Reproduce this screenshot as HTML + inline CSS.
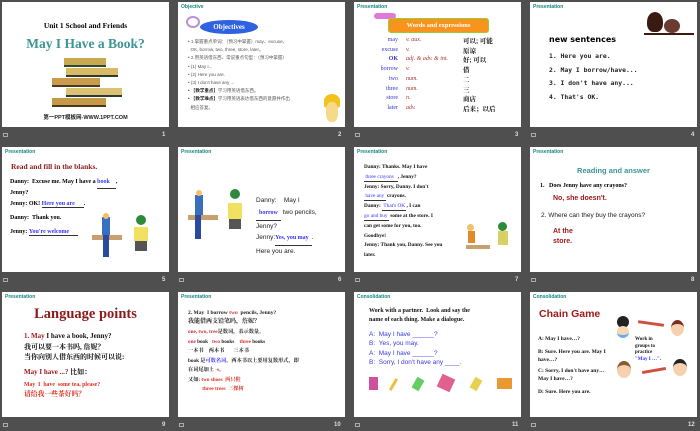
<!DOCTYPE html>
<html><head><meta charset="utf-8"><style>
*{margin:0;padding:0;box-sizing:border-box}
body{width:700px;height:431px;background:#4f4f4f;position:relative;overflow:hidden;font-family:"Liberation Sans","Noto Sans CJK SC",sans-serif}
.s{position:absolute;width:167px;height:125px;background:#fff;overflow:hidden}
.s div,.s span.a{position:absolute;white-space:nowrap}
.h{left:3px;top:2px;font-size:5px;color:#16877f;font-weight:bold}
.n{position:absolute;color:#ddd;font-size:6px;font-weight:bold}
.ic{position:absolute;width:5px;height:4px;border:1px solid #aaa}
.sf{font-family:"Liberation Serif","Noto Serif CJK SC",serif}
.b{font-weight:bold}
.u{border-bottom:1px solid #333;display:inline-block;color:#33f}
</style></head><body>

<!-- slide 1 -->
<div class="s" style="left:2px;top:2px">
<div class="sf b" style="left:0;width:167px;text-align:center;top:19px;font-size:7.5px">Unit 1 School and Friends</div>
<div class="sf b" style="left:0;width:167px;text-align:center;top:34px;font-size:13.5px;color:#3a9595">May I Have a Book?</div>
<div style="left:62px;top:56px;width:42px;height:9px;background:#c9a94f;border-bottom:2px solid #2c4a35"></div>
<div style="left:64px;top:66px;width:52px;height:9px;background:#d9bb66;border-bottom:2px solid #2f3a2c"></div>
<div style="left:50px;top:76px;width:48px;height:9px;background:#c89c4a;border-bottom:2px solid #4a3a20"></div>
<div style="left:64px;top:86px;width:56px;height:9px;background:#dcc277;border-bottom:2px solid #2c3a30"></div>
<div style="left:50px;top:96px;width:54px;height:9px;background:#c49a48;border-bottom:2px solid #4a3a20"></div>
<div class="b" style="left:0;width:167px;text-align:center;top:111px;font-size:5.5px;color:#222">第一PPT模板网-WWW.1PPT.COM</div>
</div>

<!-- slide 2 -->
<div class="s" style="left:178px;top:2px">
<div class="h">Objective</div>
<div style="left:8px;top:14px;width:14px;height:12px;border:2px solid #b88fd8;border-radius:50%"></div>
<div style="left:22px;top:18px;width:58px;height:14px;background:#2f62e0;border-radius:50%;color:#fff;font-size:7px;font-weight:bold;text-align:center;line-height:14px" class="sf">Objectives</div>
<div style="left:10px;top:36px;font-size:4.5px;color:#555;line-height:8.2px">• 1.掌握重点单词：（预习中掌握）may、excuse、<br>&nbsp;&nbsp;OK, borrow, two, three, store, later。<br>• 2.用英语借东西、常说重点句型：（预习中掌握）<br>• (1) May I...<br>• (2) Here you are.<br>• (3) I don't have any ...<br><b style="color:#222">• 【教学重点】</b>学习用英语借东西。<br><b style="color:#222">• 【教学难点】</b>学习用英语表达借东西的意愿并作出<br>&nbsp;&nbsp;相应答复。</div>
<div style="left:146px;top:92px;width:16px;height:14px;background:#f3c21c;border-radius:50% 50% 20% 20%"></div>
<div style="left:148px;top:100px;width:12px;height:20px;background:#f7d98a;border-radius:40%"></div>
</div>

<!-- slide 3 -->
<div class="s" style="left:354px;top:2px">
<div class="h">Presentation</div>
<div style="left:20px;top:11px;width:22px;height:6px;background:#e07ad8;border-radius:3px"></div>
<div class="sf b" style="left:34px;top:16px;width:101px;height:15px;background:#f7941d;border:1px solid #9c3;border-radius:3px;color:#fff;font-size:6.5px;text-align:center;line-height:13px">Words and expressions</div>
<div class="sf" style="left:0;width:44px;text-align:right;top:34px;font-size:6px;line-height:9.7px;color:#33c">may<br>excuse<br><b>OK</b><br>borrow<br>two<br>three<br>store<br>later</div>
<div class="sf" style="left:52px;top:34px;font-size:6px;line-height:9.7px;color:#a33;font-style:italic">v. aux.<br>v.<br>adj. &amp; adv. &amp; int.<br>v.<br>num.<br>num.<br>n.<br>adv.</div>
<div class="b" style="left:109px;top:34px;font-size:6.5px;line-height:9.7px;color:#111;font-family:'Noto Serif CJK SC',serif">可以; 可能<br>原谅<br>好; 可以<br>借<br>二<br>三<br>商店<br>后来；以后</div>
</div>

<!-- slide 4 -->
<div class="s" style="left:530px;top:2px">
<div class="h">Presentation</div>
<div style="left:117px;top:10px;width:16px;height:20px;background:#3a1a12;border-radius:50% 50% 40% 40%"></div>
<div style="left:134px;top:17px;width:16px;height:14px;background:#6b3a30;border-radius:50%"></div>
<div style="left:114px;top:31px;width:50px;height:1.5px;background:#3a1a12"></div>
<div class="b" style="left:19px;top:33px;font-size:8px;font-family:'DejaVu Sans',sans-serif">new sentences</div>
<div style="left:19px;top:48px;font-size:6.4px;line-height:13.5px;font-family:'DejaVu Sans Mono',monospace;font-weight:bold;color:#222">1. Here you are.<br>2. May I borrow/have...<br>3. I don't have any...<br>4. That's OK.</div>
</div>

<!-- slide 5 -->
<div class="s" style="left:2px;top:147px">
<div class="h">Presentation</div>
<div class="sf b" style="left:9px;top:15px;font-size:7.5px;color:#8b1a1a">Read and fill in the blanks.</div>
<div class="sf b" style="left:8px;top:31px;font-size:6px;line-height:9.5px">Danny: &nbsp;Excuse me. May I have a <span class="u">book&nbsp;&nbsp;&nbsp;&nbsp;</span>,<br>Jenny?</div>
<div class="sf b" style="left:8px;top:54px;font-size:6px">Jenny: OK! <span class="u">Here you are&nbsp;&nbsp;&nbsp;&nbsp;&nbsp;&nbsp;</span>.</div>
<div class="sf b" style="left:8px;top:68px;font-size:6px">Danny: &nbsp;Thank you.</div>
<div class="sf b" style="left:8px;top:82px;font-size:6px">Jenny: <span class="u">You're welcome&nbsp;&nbsp;&nbsp;&nbsp;&nbsp;&nbsp;</span></div>
<div style="left:90px;top:88px;width:30px;height:5px;background:#c8a070"></div>
<div style="left:100px;top:70px;width:8px;height:18px;background:#3a6fc0"></div>
<div style="left:101px;top:66px;width:6px;height:6px;background:#f2c06a;border-radius:50%"></div>
<div style="left:101px;top:88px;width:6px;height:22px;background:#2a4aa0"></div>
<div style="left:132px;top:80px;width:14px;height:14px;background:#f2e060"></div>
<div style="left:134px;top:68px;width:10px;height:10px;background:#2e8a3a;border-radius:50%"></div>
<div style="left:133px;top:94px;width:12px;height:10px;background:#555"></div>
</div>

<!-- slide 6 -->
<div class="s" style="left:178px;top:147px">
<div class="h">Presentation</div>
<div style="left:10px;top:68px;width:30px;height:5px;background:#c8a070"></div>
<div style="left:17px;top:48px;width:8px;height:20px;background:#3a6fc0"></div>
<div style="left:18px;top:43px;width:6px;height:6px;background:#f2c06a;border-radius:50%"></div>
<div style="left:17px;top:68px;width:6px;height:24px;background:#2a4aa0"></div>
<div style="left:50px;top:56px;width:14px;height:16px;background:#f2e060"></div>
<div style="left:52px;top:42px;width:10px;height:10px;background:#2e8a3a;border-radius:50%"></div>
<div style="left:51px;top:72px;width:12px;height:10px;background:#555"></div>
<div style="left:78px;top:48px;font-size:6.5px;line-height:11.8px;color:#222">Danny: &nbsp;&nbsp;&nbsp;May I<br><span class="u b sf" style="font-size:6px">&nbsp;&nbsp;borrow&nbsp;&nbsp;</span> two pencils,<br>Jenny?<br>Jenny:<span class="u b sf" style="font-size:6px">Yes, you may&nbsp;&nbsp;</span>.<br>Here you are.</div>
</div>

<!-- slide 7 -->
<div class="s" style="left:354px;top:147px">
<div class="h">Presentation</div>
<div class="sf b" style="left:10px;top:16px;font-size:5.3px;line-height:9.8px;color:#111">Danny: Thanks. May I have<br><span class="u" style="font-weight:normal;line-height:7px">&nbsp;three crayons&nbsp;&nbsp;&nbsp;</span>, Jenny?<br>Jenny: Sorry, Danny. I don't<br><span class="u" style="font-weight:normal;line-height:7px">&nbsp;have&nbsp;any&nbsp;</span> crayons.<br>Danny: <span class="u" style="font-weight:normal;line-height:7px">&nbsp;That's OK&nbsp;</span>, I can<br><span class="u" style="font-weight:normal;line-height:7px">go and buy&nbsp;</span> some at the store. I<br>can get some for you, too.<br>Goodbye!<br>Jenny: Thank you, Danny. See you<br>later.</div>
<div style="left:112px;top:98px;width:24px;height:4px;background:#c8a070"></div>
<div style="left:114px;top:84px;width:7px;height:12px;background:#e08a2a"></div>
<div style="left:113px;top:77px;width:7px;height:7px;background:#f2c06a;border-radius:50%"></div>
<div style="left:144px;top:84px;width:10px;height:14px;background:#d8d060"></div>
<div style="left:144px;top:75px;width:9px;height:9px;background:#2e8a3a;border-radius:50%"></div>
</div>

<!-- slide 8 -->
<div class="s" style="left:530px;top:147px">
<div class="h">Presentation</div>
<div class="b" style="left:0;width:167px;text-align:center;top:19px;font-size:7.5px;color:#3a9595">Reading and answer</div>
<div class="sf b" style="left:10px;top:36px;font-size:6px">1. &nbsp;&nbsp;Does Jenny have any crayons?</div>
<div class="b" style="left:23px;top:48px;font-size:7px;color:#a01818">No, she doesn't.</div>
<div style="left:11px;top:65px;font-size:6.5px;color:#222">2. Where can they buy the crayons?</div>
<div class="b" style="left:23px;top:80px;font-size:7px;color:#a01818;line-height:10px">At the<br>store.</div>
</div>

<!-- slide 9 -->
<div class="s" style="left:2px;top:292px">
<div class="h">Presentation</div>
<div class="sf b" style="left:0;width:167px;text-align:center;top:14px;font-size:14.5px;color:#8b1a1a">Language points</div>
<div class="sf b" style="left:22px;top:39px;font-size:7px;line-height:10.5px;color:#111"><span style="color:#a01818">1. May</span> I have a book, Jenny?<br>我可以要一本书吗, 詹妮？<br>当你向别人借东西的时候可以说:</div>
<div class="sf b" style="left:22px;top:75px;font-size:7px;color:#a01818">May I have ...? <span style="color:#111">比如：</span></div>
<div class="sf b" style="left:22px;top:89px;font-size:5.8px;line-height:9px;color:#e03020">May &nbsp;I &nbsp;have &nbsp;some tea, please?<br><span style="font-size:6.8px">请给我一些茶好吗？</span></div>
</div>

<!-- slide 10 -->
<div class="s" style="left:178px;top:292px">
<div class="h">Presentation</div>
<div class="sf b" style="left:10px;top:17px;font-size:5.5px;line-height:9px;color:#222">2. May &nbsp;I borrow <span style="color:#c33">two</span> &nbsp;pencils, Jenny?<br><span style="font-size:6px">我能借两支铅笔吗，詹妮？</span></div>
<div class="sf b" style="left:10px;top:36px;font-size:5.2px;line-height:9.5px;color:#222"><span style="color:#c33">one, two, tree</span>是数词，表示数量。<br><span style="color:#c33">one</span> book &nbsp;&nbsp;<span style="color:#c33">two</span> books &nbsp;&nbsp;&nbsp;<span style="color:#c33">three</span> books<br>一本书 &nbsp;&nbsp;&nbsp;两本书 &nbsp;&nbsp;&nbsp;&nbsp;&nbsp;&nbsp;三本书<br>book 是<span style="color:#33f">可数名词</span>，两本书以上要用复数形式，即<br>在词尾加上 <span style="color:#c33">-s</span>。<br>又如: <span style="color:#e03020">two shoes &nbsp;两只鞋</span><br>&nbsp;&nbsp;&nbsp;&nbsp;&nbsp;&nbsp;&nbsp;&nbsp;&nbsp;&nbsp;&nbsp;<span style="color:#e03020">three trees &nbsp;三棵树</span></div>
</div>

<!-- slide 11 -->
<div class="s" style="left:354px;top:292px">
<div class="h">Consolidation</div>
<div class="sf b" style="left:15px;top:15px;font-size:6px;line-height:8.5px;color:#111">Work with a partner. &nbsp;Look and say the<br>name of each thing. Make a dialogue.</div>
<div style="left:15px;top:38px;font-size:6.5px;line-height:9.3px;color:#3a3ae0">A: &nbsp;May I have ______?<br>B: &nbsp;Yes, you may.<br>A: &nbsp;May I have ______?<br>B: &nbsp;Sorry, I don't have any ____.</div>
<div style="left:15px;top:85px;width:9px;height:13px;background:#d050a0"></div>
<div style="left:38px;top:86px;width:3px;height:13px;background:#e8c040;transform:rotate(30deg)"></div>
<div style="left:60px;top:86px;width:8px;height:12px;background:#6c6;transform:rotate(30deg)"></div>
<div style="left:85px;top:84px;width:14px;height:14px;background:#e06090;transform:rotate(25deg)"></div>
<div style="left:118px;top:86px;width:8px;height:12px;background:#e8d050;transform:rotate(30deg)"></div>
<div style="left:143px;top:86px;width:15px;height:11px;background:#e89a30"></div>
</div>

<!-- slide 12 -->
<div class="s" style="left:530px;top:292px">
<div class="h">Consolidation</div>
<div class="b" style="left:9px;top:16px;font-size:10.5px;color:#a01818">Chain Game</div>
<div class="sf b" style="left:8px;top:43px;font-size:5.5px;line-height:8.5px;color:#111">A: May I have…?</div>
<div class="sf b" style="left:8px;top:57px;font-size:5.5px;line-height:7.5px;color:#111">B: Sure. Here you are. May I<br>have…?</div>
<div class="sf b" style="left:8px;top:76px;font-size:5.5px;line-height:7.5px;color:#111">C: Sorry, I don't have any…<br>May I have…?</div>
<div class="sf b" style="left:8px;top:97px;font-size:5.5px;color:#111">D: Sure. Here you are.</div>
<div class="sf b" style="left:105px;top:45px;font-size:5px;line-height:6.5px;color:#111">Work in<br>groups to<br>practice<br><span style="color:#33f">"May I …"</span>.</div>
<div style="left:87px;top:24px;width:12px;height:12px;background:#222;border-radius:50%"></div>
<div style="left:87px;top:34px;width:12px;height:12px;background:#f7d8b0;border-radius:50%;border-bottom:3px solid #6af"></div>
<div style="left:141px;top:28px;width:13px;height:16px;background:#f7d0b0;border-radius:50%;border-top:4px solid #7a3020"></div>
<div style="left:87px;top:69px;width:14px;height:17px;background:#f7d0b0;border-radius:50%;border-top:4px solid #8a5a30"></div>
<div style="left:143px;top:67px;width:14px;height:17px;background:#f7d0b0;border-radius:50%;border-top:4px solid #222"></div>
<div style="left:108px;top:30px;width:26px;height:3px;background:#d05040;transform:rotate(8deg)"></div>
<div style="left:112px;top:77px;width:24px;height:3px;background:#d05040;transform:rotate(-10deg)"></div>
</div>

<!-- labels -->
<div class="ic" style="left:3px;top:133px"></div><div class="n" style="left:162px;top:132px">1</div>
<div class="n" style="left:338px;top:132px">2</div>
<div class="ic" style="left:355px;top:133px"></div><div class="n" style="left:515px;top:132px">3</div>
<div class="ic" style="left:531px;top:133px"></div><div class="n" style="left:691px;top:132px">4</div>
<div class="ic" style="left:3px;top:278px"></div><div class="n" style="left:162px;top:277px">5</div>
<div class="ic" style="left:179px;top:278px"></div><div class="n" style="left:338px;top:277px">6</div>
<div class="ic" style="left:355px;top:278px"></div><div class="n" style="left:515px;top:277px">7</div>
<div class="ic" style="left:531px;top:278px"></div><div class="n" style="left:691px;top:277px">8</div>
<div class="ic" style="left:3px;top:423px"></div><div class="n" style="left:162px;top:422px">9</div>
<div class="ic" style="left:179px;top:423px"></div><div class="n" style="left:334px;top:422px">10</div>
<div class="ic" style="left:355px;top:423px"></div><div class="n" style="left:512px;top:422px">11</div>
<div class="ic" style="left:531px;top:423px"></div><div class="n" style="left:688px;top:422px">12</div>
</body></html>
